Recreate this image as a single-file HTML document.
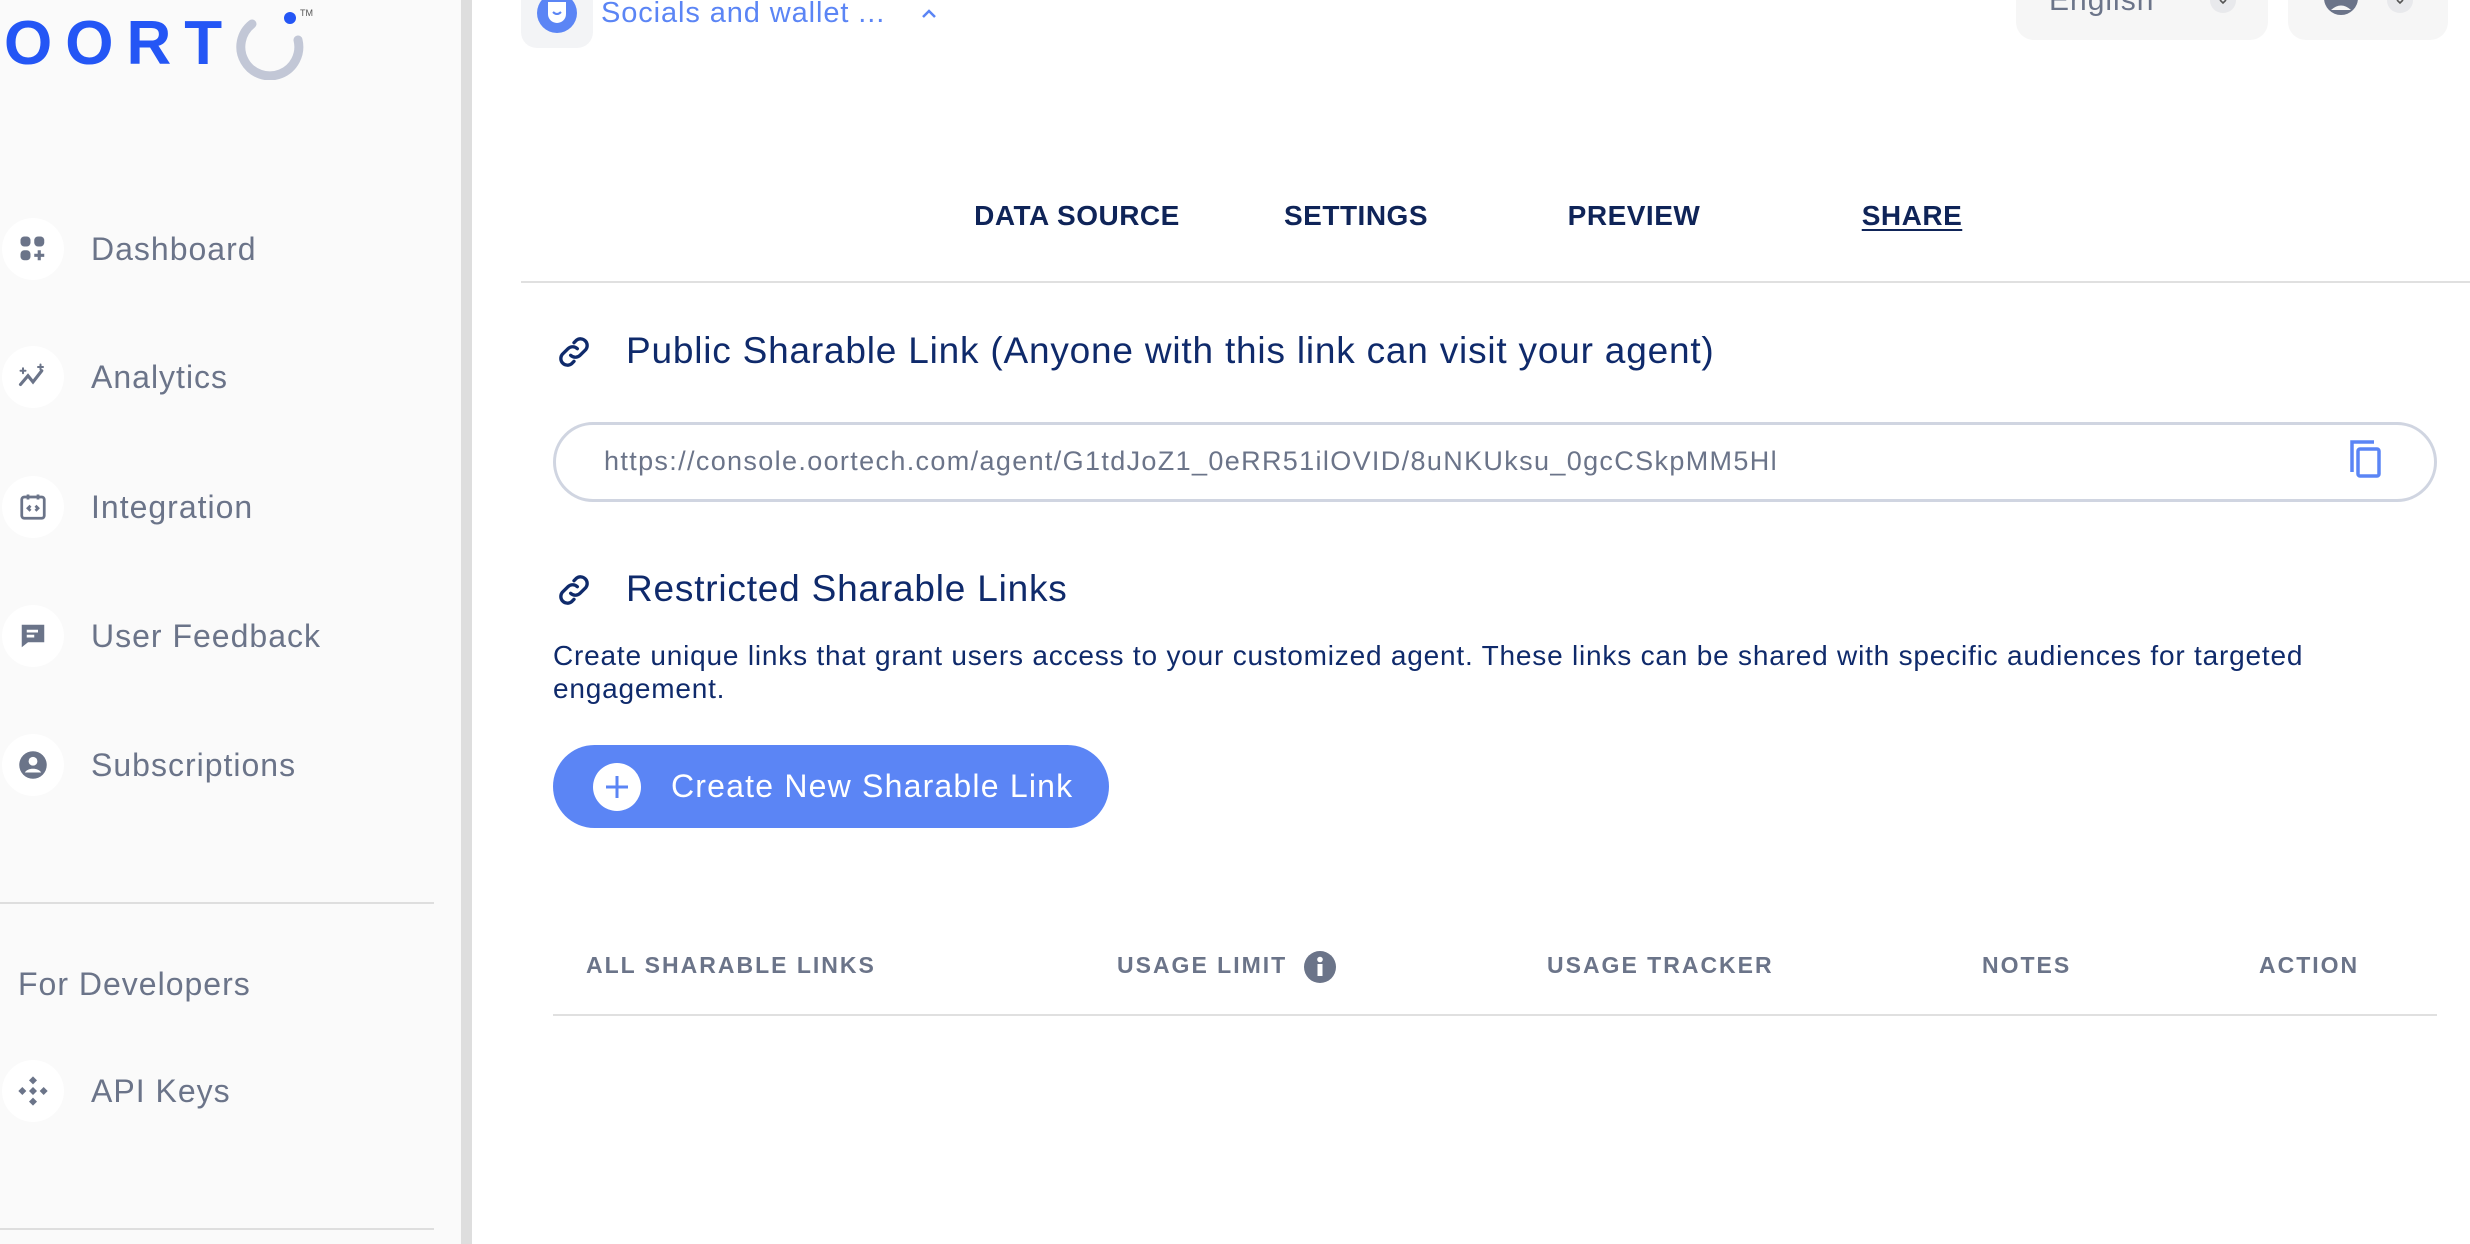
<!DOCTYPE html>
<html><head><meta charset="utf-8"><style>
*{margin:0;padding:0;box-sizing:border-box}
body{width:2470px;height:1244px;overflow:hidden;background:#fff;font-family:"Liberation Sans",sans-serif;position:relative}
.a{position:absolute;white-space:nowrap}
#side{position:absolute;left:0;top:0;width:461px;height:1244px;background:#fafafa}
#bar{position:absolute;left:461px;top:0;width:11px;height:1244px;background:#dedede}
.nav{position:absolute;left:0;height:62px;display:flex;align-items:center}
.nav .ic{width:62px;height:62px;border-radius:50%;background:#fff;display:flex;align-items:center;justify-content:center;margin-left:2px}
.nav span{margin-left:27px;font-size:32px;color:#6b7489;letter-spacing:1px}
.tab{position:absolute;top:200px;font-size:28px;font-weight:bold;color:#0f2458;letter-spacing:0.5px;transform:translateX(-50%)}
.th{position:absolute;top:952px;font-size:23px;font-weight:bold;color:#6b7489;letter-spacing:2px}
.h{position:absolute;font-size:37px;color:#0f2a6b;letter-spacing:0.8px}
</style></head><body>
<div id="side"></div><div id="bar"></div>
<div class="a" style="left:4px;top:12px;font-size:62px;font-weight:900;color:#2456f5;letter-spacing:13px;line-height:64px">OORT</div>
<svg class="a" style="left:232px;top:4px" width="82" height="76" viewBox="0 0 82 76"><path d="M20 20 A29 29 0 1 0 66 36" fill="none" stroke="#c2c7d6" stroke-width="9" stroke-linecap="round"/><circle cx="58" cy="14" r="6" fill="#2456f5"/><text x="68" y="12" font-size="9" fill="#555" font-family="Liberation Sans">TM</text></svg>

<div class="nav" style="top:218px"><div class="ic"><svg width="30" height="30" viewBox="0 0 24 24" fill="#6b7489"><rect x="2" y="2" width="8" height="8" rx="3"/><rect x="13" y="2" width="8" height="8" rx="3"/><rect x="2" y="13" width="8" height="8" rx="3"/><path d="M17 13v8M13 17h8" stroke="#6b7489" stroke-width="2.5"/></svg></div><span>Dashboard</span></div>
<div class="nav" style="top:346px"><div class="ic"><svg width="34" height="30" viewBox="0 0 26 24" fill="none" stroke="#6b7489" stroke-width="2.5" stroke-linecap="round"><path d="M3 18l6-7 4 5 7-9"/><path d="M5 5v4M3 7h4M19 2v4M17 4h4" stroke-width="1.6"/></svg></div><span>Analytics</span></div>
<div class="nav" style="top:476px"><div class="ic"><svg width="30" height="30" viewBox="0 0 24 24" fill="none" stroke="#6b7489" stroke-width="2.2"><rect x="3" y="4" width="18" height="17" rx="2"/><path d="M8 2v4M16 2v4M10 11l-2 2 2 2M14 11l2 2-2 2"/></svg></div><span>Integration</span></div>
<div class="nav" style="top:605px"><div class="ic"><svg width="30" height="30" viewBox="0 0 24 24" fill="#6b7489"><path d="M3 3h18v14H8l-5 4z"/><rect x="7" y="7" width="9" height="2.2" fill="#fff"/><rect x="7" y="11" width="6" height="2.2" fill="#fff"/></svg></div><span>User Feedback</span></div>
<div class="nav" style="top:734px"><div class="ic"><svg width="30" height="30" viewBox="0 0 24 24"><circle cx="12" cy="12" r="11" fill="#6b7489"/><circle cx="12" cy="9" r="3.5" fill="#fff"/><path d="M5.5 18c2-4 11-4 13 0" fill="#fff"/></svg></div><span>Subscriptions</span></div>
<div class="a" style="left:0;top:902px;width:434px;height:2px;background:#dedede"></div>
<div class="a" style="left:18px;top:966px;font-size:32px;color:#6b7489;letter-spacing:1px">For Developers</div>
<div class="nav" style="top:1060px"><div class="ic"><svg width="32" height="32" viewBox="0 0 24 24" fill="#6b7489"><path d="M12 1l3 3-3 3-3-3zM12 17l3 3-3 3-3-3zM1 12l3-3 3 3-3 3zM17 12l3-3 3 3-3 3zM12 9l3 3-3 3-3-3z"/></svg></div><span>API Keys</span></div>
<div class="a" style="left:0;top:1228px;width:434px;height:2px;background:#dedede"></div>

<div class="a" style="left:521px;top:-20px;width:72px;height:68px;border-radius:16px;background:#f3f4f6"></div>
<svg class="a" style="left:536px;top:-8px" width="42" height="42" viewBox="0 0 42 42"><circle cx="21" cy="21" r="20" fill="#5b85f5"/><path d="M12 10h18v12a9 9 0 0 1-18 0z" fill="#fff"/><path d="M17 20q4 4 8 0" stroke="#5b85f5" stroke-width="2" fill="none"/></svg>
<div class="a" style="left:601px;top:-4px;font-size:29px;color:#5b85f5;line-height:34px;letter-spacing:0.9px">Socials and wallet ...</div>
<svg class="a" style="left:920px;top:6px" width="18" height="14" viewBox="0 0 18 14"><path d="M3 11l6-6 6 6" stroke="#5b85f5" stroke-width="2.5" fill="none"/></svg>
<div class="a" style="left:2016px;top:-20px;width:252px;height:60px;border-radius:18px;background:#f6f6f6"></div>
<div class="a" style="left:2049px;top:-16px;font-size:30px;color:#6b7489;letter-spacing:1px">English</div>
<div class="a" style="left:2210px;top:-12px;width:26px;height:25px;border-radius:50%;background:#e8e9ec"></div>
<svg class="a" style="left:2216px;top:0" width="14" height="8" viewBox="0 0 14 8"><path d="M4 0l3 3 3-3" stroke="#555" stroke-width="1.6" fill="none"/></svg>
<div class="a" style="left:2288px;top:-20px;width:160px;height:60px;border-radius:18px;background:#f6f6f6"></div>
<svg class="a" style="left:2322px;top:-14px" width="38" height="34" viewBox="0 0 38 34"><circle cx="19" cy="12" r="17" fill="#6b7489"/><circle cx="19" cy="8" r="6" fill="#f6f6f6"/><path d="M9 24q10-9 20 0" fill="#f6f6f6"/></svg>
<div class="a" style="left:2387px;top:-12px;width:26px;height:25px;border-radius:50%;background:#e8e9ec"></div>
<svg class="a" style="left:2393px;top:0" width="14" height="8" viewBox="0 0 14 8"><path d="M4 0l3 3 3-3" stroke="#555" stroke-width="1.6" fill="none"/></svg>

<div class="tab" style="left:1077px">DATA SOURCE</div>
<div class="tab" style="left:1356px">SETTINGS</div>
<div class="tab" style="left:1634px">PREVIEW</div>
<div class="tab" style="left:1912px;text-decoration:underline;text-underline-offset:4px">SHARE</div>
<div class="a" style="left:521px;top:281px;width:1949px;height:2px;background:#e0e0e0"></div>

<svg class="a" style="left:554px;top:332px" width="40" height="40" viewBox="0 0 24 24" fill="none" stroke="#0f2a6b" stroke-width="2" stroke-linecap="round"><path d="M10 14a4 4 0 0 0 5.6 0l3.5-3.5a4 4 0 0 0-5.6-5.6l-1.5 1.5"/><path d="M14 10a4 4 0 0 0-5.6 0l-3.5 3.5a4 4 0 0 0 5.6 5.6l1.5-1.5"/></svg>
<div class="h" style="left:626px;top:330px">Public Sharable Link (Anyone with this link can visit your agent)</div>
<div class="a" style="left:553px;top:422px;width:1884px;height:80px;border:3px solid #d0d5e1;border-radius:40px"></div>
<div class="a" style="left:604px;top:446px;font-size:27px;color:#6b7489;letter-spacing:1.35px">https://console.oortech.com/agent/G1tdJoZ1_0eRR51ilOVID/8uNKUksu_0gcCSkpMM5Hl</div>
<svg class="a" style="left:2350px;top:440px" width="32" height="38" viewBox="0 0 32 38" fill="none" stroke="#5b85f5" stroke-width="3.5"><path d="M2 32V2h22"/><rect x="8" y="9" width="21" height="27" rx="2"/></svg>

<svg class="a" style="left:554px;top:570px" width="40" height="40" viewBox="0 0 24 24" fill="none" stroke="#0f2a6b" stroke-width="2" stroke-linecap="round"><path d="M10 14a4 4 0 0 0 5.6 0l3.5-3.5a4 4 0 0 0-5.6-5.6l-1.5 1.5"/><path d="M14 10a4 4 0 0 0-5.6 0l-3.5 3.5a4 4 0 0 0 5.6 5.6l1.5-1.5"/></svg>
<div class="h" style="left:626px;top:568px">Restricted Sharable Links</div>
<div class="a" style="left:553px;top:639px;font-size:28px;color:#0f2a6b;line-height:33px;white-space:normal;width:1890px;letter-spacing:0.8px">Create unique links that grant users access to your customized agent. These links can be shared with specific audiences for targeted engagement.</div>
<div class="a" style="left:553px;top:745px;width:556px;height:83px;border-radius:42px;background:#5b85f5"></div>
<svg class="a" style="left:592px;top:762px" width="50" height="50" viewBox="0 0 50 50"><circle cx="25" cy="25" r="24" fill="#fff"/><path d="M25 14v22M14 25h22" stroke="#5b85f5" stroke-width="3"/></svg>
<div class="a" style="left:671px;top:768px;font-size:32px;color:#fff;letter-spacing:1.2px">Create New Sharable Link</div>

<div class="th" style="left:586px">ALL SHARABLE LINKS</div>
<div class="th" style="left:1117px">USAGE LIMIT</div>
<svg class="a" style="left:1303px;top:950px" width="34" height="34" viewBox="0 0 34 34"><circle cx="17" cy="17" r="16" fill="#6b7489"/><rect x="14.5" y="14" width="5" height="12" fill="#fff"/><circle cx="17" cy="9.5" r="2.8" fill="#fff"/></svg>
<div class="th" style="left:1547px">USAGE TRACKER</div>
<div class="th" style="left:1982px">NOTES</div>
<div class="th" style="left:2259px">ACTION</div>
<div class="a" style="left:553px;top:1014px;width:1884px;height:2px;background:#e0e0e0"></div>
</body></html>
